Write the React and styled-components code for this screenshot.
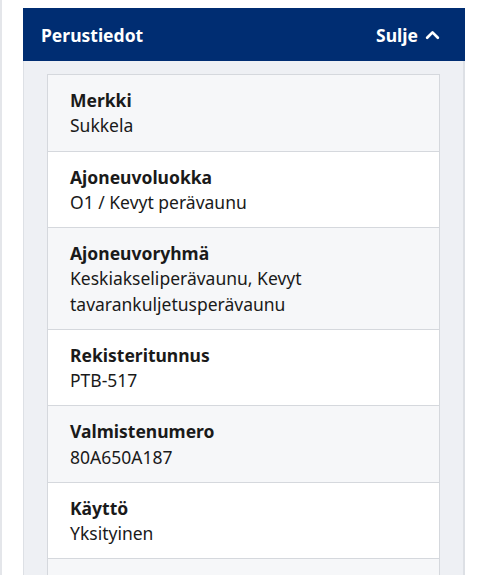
import React from "react";
import styled, { createGlobalStyle } from "styled-components";

const GlobalStyle = createGlobalStyle`
  body {
    margin: 0;
    background: #fff;
    font-family: "Noto Sans", "Open Sans", sans-serif;
    color: #1a1a1a;
  }
`;

const Page = styled.div`
  height: 575px;
  overflow: hidden;
  box-sizing: border-box;
  border-left: 2px solid #e4e6ea;
  padding: 8px 13px 0 21px;
`;

const Panel = styled.section`
  background: #eef0f4;
  border-left: 1px solid #dde0e5;
  border-right: 2px solid #dde0e5;
  padding-bottom: 24px;
`;

const Header = styled.header`
  display: flex;
  align-items: center;
  justify-content: space-between;
  height: 53px;
  margin: 0 -2px 0 -1px;
  padding: 0 25px 0 18px;
  background: #002d72;
  color: #fff;
  font-weight: 700;
  font-size: 17.5px;
`;

const Toggle = styled.span`
  display: flex;
  align-items: center;
  gap: 7px;

  svg {
    width: 15px;
    height: 15px;
  }
`;

const List = styled.dl`
  margin: 13px 23px 0 23px;
  border: 1px solid #d5d8dd;
  border-bottom: none;
`;

const Row = styled.div`
  padding: 13px 22px 12px;
  background: ${(p) => (p.$shaded ? "#f6f7f9" : "#fff")};
  border-bottom: 1px solid #d5d8dd;
  font-size: 17.5px;
  line-height: 25.25px;
`;

const Label = styled.dt`
  font-weight: 700;
`;

const Value = styled.dd`
  margin: 0;
`;

const rows = [
  ["Merkki", "Sukkela"],
  ["Ajoneuvoluokka", "O1 / Kevyt perävaunu"],
  ["Ajoneuvoryhmä", "Keskiakseliperävaunu, Kevyt tavarankuljetusperävaunu"],
  ["Rekisteritunnus", "PTB-517"],
  ["Valmistenumero", "80A650A187"],
  ["Käyttö", "Yksityinen"],
];

export default function App() {
  return (
    <Page>
      <GlobalStyle />
      <Panel>
        <Header>
          <span>Perustiedot</span>
          <Toggle>
            Sulje
            <svg viewBox="0 0 14 14" fill="none" stroke="currentColor" strokeWidth="2.5" strokeLinecap="round" strokeLinejoin="round">
              <path d="M2 10 L7 5 L12 10" />
            </svg>
          </Toggle>
        </Header>
        <List>
          {rows.map(([label, value], i) => (
            <Row key={label} $shaded={i % 2 === 0}>
              <Label>{label}</Label>
              <Value>{value}</Value>
            </Row>
          ))}
          <Row $shaded>
            <Label>{"\u00A0"}</Label>
            <Value>{"\u00A0"}</Value>
          </Row>
        </List>
      </Panel>
    </Page>
  );
}
